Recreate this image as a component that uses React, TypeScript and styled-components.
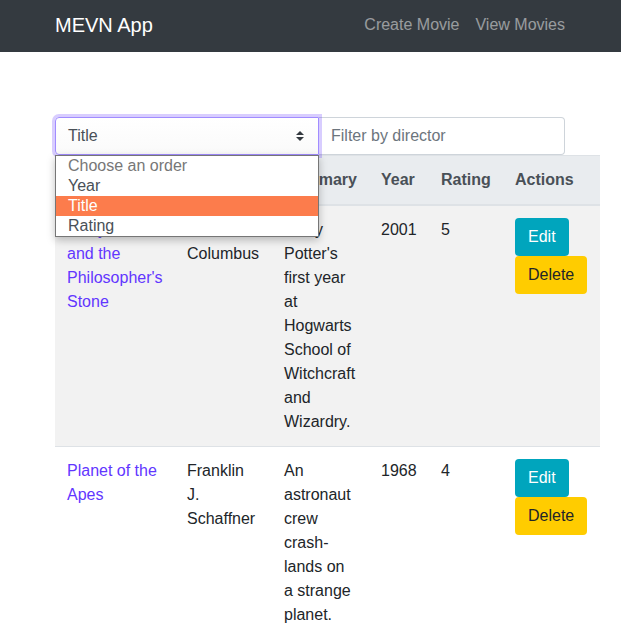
import React from "react";
import styled, { createGlobalStyle } from "styled-components";

type Movie = {
  title: string;
  director: string;
  summary: string;
  year: number;
  rating: number;
};

const movies: Movie[] = [
  {
    title: "Harry Potter and the Philosopher's Stone",
    director: "Chris Columbus",
    summary:
      "Harry Potter's first year at Hogwarts School of Witchcraft and Wizardry.",
    year: 2001,
    rating: 5,
  },
  {
    title: "Planet of the Apes",
    director: "Franklin J. Schaffner",
    summary: "An astronaut crew crash-lands on a strange planet.",
    year: 1968,
    rating: 4,
  },
];

const orders = ["Choose an order", "Year", "Title", "Rating"];
const columns = [
  { label: "Title", width: 120 },
  { label: "Director", width: 97 },
  { label: "Summary", width: 97 },
  { label: "Year", width: 60 },
  { label: "Rating", width: 74 },
  { label: "Actions", width: 97 },
];

const App = () => {
  const selected = "Title";

  return (
    <>
      <GlobalStyle />
      <Navbar>
        <Container className="nav">
          <Brand>MEVN App</Brand>
          <NavLinks>
            <NavLink>Create Movie</NavLink>
            <NavLink>View Movies</NavLink>
          </NavLinks>
        </Container>
      </Navbar>

      <Container>
        <FilterGroup>
          <SelectWrap>
            <SelectBox>
              <span>{selected}</span>
              <svg width="8" height="10" viewBox="0 0 8 10">
                <path d="M4 0 L8 4 H0 Z M4 10 L0 6 H8 Z" fill="#343a40" />
              </svg>
            </SelectBox>
            <Dropdown>
              {orders.map((o, i) => (
                <Option key={o} $active={o === selected} $placeholder={i === 0}>
                  {o}
                </Option>
              ))}
            </Dropdown>
          </SelectWrap>
          <FilterInput placeholder="Filter by director" />
        </FilterGroup>

        <Table>
          <colgroup>
            {columns.map((c) => (
              <col key={c.label} style={{ width: c.width }} />
            ))}
          </colgroup>
          <thead>
            <tr>
              {columns.map((c) => (
                <th key={c.label}>{c.label}</th>
              ))}
            </tr>
          </thead>
          <tbody>
            {movies.map((m) => (
              <tr key={m.title}>
                <td>
                  <TitleLink>{m.title}</TitleLink>
                </td>
                <td>{m.director}</td>
                <td>{m.summary}</td>
                <td>{m.year}</td>
                <td>{m.rating}</td>
                <td>
                  <Button $variant="info">Edit</Button>
                  <Button $variant="warning">Delete</Button>
                </td>
              </tr>
            ))}
          </tbody>
        </Table>
      </Container>
    </>
  );
};

export default App;

const GlobalStyle = createGlobalStyle`
  * { box-sizing: border-box; }
  body {
    margin: 0;
    font-family: "Liberation Sans", Arial, sans-serif;
    font-size: 16px;
    line-height: 1.5;
    color: #212529;
    background: #fff;
  }
`;

const Navbar = styled.nav`
  height: 52px;
  padding-bottom: 2px;
  background-color: #343a40;
  display: flex;
  align-items: center;
`;

const Container = styled.div`
  width: 540px;
  margin: 0 calc(50% - 270px) 0 calc(50% - 270.5px);
  padding: 0 15px;

  &.nav {
    display: flex;
    justify-content: space-between;
    align-items: center;
  }
`;

const Brand = styled.a`
  font-size: 20px;
  color: #fff;
  line-height: 30px;
`;

const NavLinks = styled.div`
  display: flex;
`;

const NavLink = styled.a`
  color: rgba(255, 255, 255, 0.5);
  padding: 0 0 0 16px;
`;

const FilterGroup = styled.div`
  display: flex;
  margin-top: 65px;
  height: 38px;
`;

const SelectWrap = styled.div`
  position: relative;
  width: 264px;
`;

const SelectBox = styled.div`
  height: 38px;
  display: flex;
  align-items: center;
  justify-content: space-between;
  padding: 0 14px 0 12px;
  border: 1px solid #a18cff;
  border-radius: 4px 0 0 4px;
  background: linear-gradient(#fff, #fafafa);
  box-shadow: 0 0 0 3px rgba(98, 54, 255, 0.25);
  color: #495057;
`;

const Dropdown = styled.div`
  position: absolute;
  top: 38px;
  left: 0;
  width: 264px;
  background: #fff;
  border: 1px solid #767676;
  box-shadow: 0 3px 8px rgba(0, 0, 0, 0.25);
  z-index: 2;
`;

const Option = styled.div<{ $active: boolean; $placeholder: boolean }>`
  height: 20px;
  line-height: 19px;
  padding: 0 12px;
  background: ${(p) => (p.$active ? "#fc7c4c" : "#fff")};
  color: ${(p) => (p.$active ? "#fff" : p.$placeholder ? "#777" : "#495057")};
`;

const FilterInput = styled.input`
  width: 246px;
  height: 38px;
  padding: 6px 12px;
  border: 1px solid #ced4da;
  border-left: none;
  border-radius: 0 4px 4px 0;
  font: inherit;
  color: #495057;
  outline: none;

  &::placeholder {
    color: #6c757d;
  }
`;

const Table = styled.table`
  width: 545px;
  table-layout: fixed;
  border-collapse: collapse;

  th,
  td {
    padding: 12px;
    vertical-align: top;
    text-align: left;
    border-top: 1px solid #dee2e6;
  }

  thead th {
    background: #e9ecef;
    color: #495057;
    font-weight: bold;
    border-bottom: 2px solid #dee2e6;
  }

  tbody tr:nth-of-type(odd) {
    background: #f2f2f2;
  }
`;

const TitleLink = styled.a`
  color: #6236ff;
`;

const Button = styled.button<{ $variant: "info" | "warning" }>`
  display: inline-block;
  font: inherit;
  padding: 6px 12px;
  line-height: 24px;
  border: 1px solid transparent;
  border-radius: 4px;
  background: ${(p) => (p.$variant === "info" ? "#00a5bd" : "#ffcc00")};
  color: ${(p) => (p.$variant === "info" ? "#fff" : "#212529")};
  cursor: pointer;
`;
